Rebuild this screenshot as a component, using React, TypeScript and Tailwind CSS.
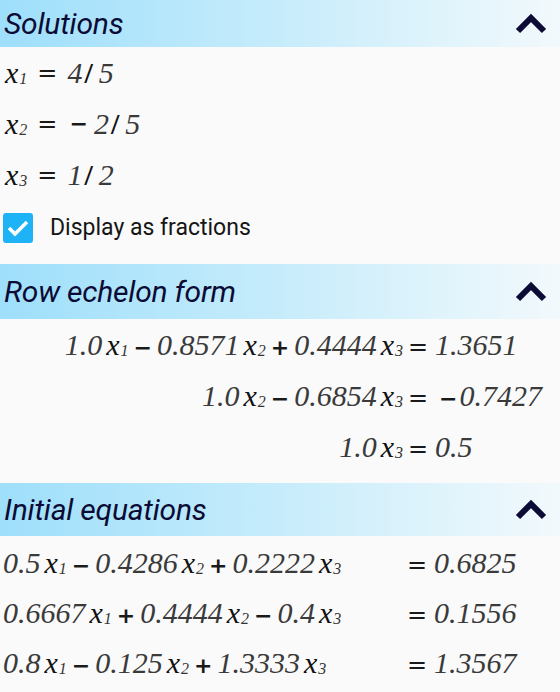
import React, { useState } from "react";

type Term = { sign?: "+" | "−"; coef: string; idx: number };

const mathFont = { fontFamily: '"Liberation Serif", "DejaVu Serif", serif' };
const opFont = { fontFamily: '"DejaVu Sans", "Liberation Sans", sans-serif' };

const Sub: React.FC<{ n: number }> = ({ n }) => (
  <sub className="text-[16px] italic text-[#333] relative top-[1px] ml-[1px]">{n}</sub>
);

const Var: React.FC<{ n: number }> = ({ n }) => (
  <span className="italic text-[#111] ml-[4px]">
    x<Sub n={n} />
  </span>
);

const Op: React.FC<{ c: string; cls?: string }> = ({ c, cls = "" }) => (
  <span className={`not-italic font-bold text-[22px] text-[#1a1a1a] ${cls}`} style={opFont}>
    {c}
  </span>
);

const Eq: React.FC<{ cls?: string }> = ({ cls = "" }) => (
  <span className={`not-italic text-[24px] text-[#1a1a1a] ${cls}`} style={opFont}>
    =
  </span>
);

const Expr: React.FC<{ terms: Term[] }> = ({ terms }) => (
  <span className="whitespace-nowrap">
    {terms.map((t, i) => (
      <span key={i}>
        {t.sign && <Op c={t.sign} cls="mx-[5px]" />}
        <span className="italic text-[#3a3a3a]">{t.coef}</span>
        <Var n={t.idx} />
      </span>
    ))}
  </span>
);

const Rhs: React.FC<{ value: string }> = ({ value }) => {
  const neg = value.startsWith("-");
  return (
    <span className="whitespace-nowrap">
      <Eq cls="mr-[7px]" />
      {neg && <Op c="−" cls="ml-[4px] mr-[2px]" />}
      <span className="italic text-[#3a3a3a]">{neg ? value.slice(1) : value}</span>
    </span>
  );
};

const ChevronUp = () => (
  <svg width="32" height="22" viewBox="0 0 32 22">
    <polyline
      points="3,18 16,5 29,18"
      fill="none"
      stroke="#0b0b35"
      strokeWidth="6"
      strokeLinejoin="miter"
    />
  </svg>
);

const SectionHeader: React.FC<{ title: string; h: string; onToggle: () => void }> = ({
  title,
  h,
  onToggle,
}) => (
  <button
    onClick={onToggle}
    className={`w-full ${h} flex items-center justify-between pl-[4px] pr-[13px] bg-gradient-to-r from-[#9edffb] via-[#c6ecfb] to-[#f2f9fc]`}
  >
    <span
      className="italic text-[30px] text-[#0b0b35] leading-none tracking-[-0.2px]"
      style={{ fontFamily: 'Roboto, "Noto Sans", sans-serif' }}
    >
      {title}
    </span>
    <ChevronUp />
  </button>
);

const echelon: { terms: Term[]; rhs: string }[] = [
  {
    terms: [
      { coef: "1.0", idx: 1 },
      { sign: "−", coef: "0.8571", idx: 2 },
      { sign: "+", coef: "0.4444", idx: 3 },
    ],
    rhs: "1.3651",
  },
  {
    terms: [
      { coef: "1.0", idx: 2 },
      { sign: "−", coef: "0.6854", idx: 3 },
    ],
    rhs: "-0.7427",
  },
  { terms: [{ coef: "1.0", idx: 3 }], rhs: "0.5" },
];

const initial: { terms: Term[]; rhs: string }[] = [
  {
    terms: [
      { coef: "0.5", idx: 1 },
      { sign: "−", coef: "0.4286", idx: 2 },
      { sign: "+", coef: "0.2222", idx: 3 },
    ],
    rhs: "0.6825",
  },
  {
    terms: [
      { coef: "0.6667", idx: 1 },
      { sign: "+", coef: "0.4444", idx: 2 },
      { sign: "−", coef: "0.4", idx: 3 },
    ],
    rhs: "0.1556",
  },
  {
    terms: [
      { coef: "0.8", idx: 1 },
      { sign: "−", coef: "0.125", idx: 2 },
      { sign: "+", coef: "1.3333", idx: 3 },
    ],
    rhs: "1.3567",
  },
];

const App: React.FC = () => {
  const [open, setOpen] = useState({ sol: true, ech: true, init: true });
  const [fractions, setFractions] = useState(true);

  const solutions = fractions
    ? [
        { idx: 1, val: "4", den: "5", neg: false },
        { idx: 2, val: "2", den: "5", neg: true },
        { idx: 3, val: "1", den: "2", neg: false },
      ]
    : [
        { idx: 1, val: "0.8", den: "", neg: false },
        { idx: 2, val: "0.4", den: "", neg: true },
        { idx: 3, val: "0.5", den: "", neg: false },
      ];

  return (
    <div className="w-[560px] h-[692px] bg-[#fafafa] overflow-hidden">
      {/* Solutions */}
      <SectionHeader title="Solutions" h="h-[47px]" onToggle={() => setOpen({ ...open, sol: !open.sol })} />
      {open.sol && (
        <div className="text-[30px]" style={mathFont}>
          {solutions.map((s) => (
            <div key={s.idx} className="h-[51px] flex items-center pl-[5px]">
              <span className="italic text-[#111]">
                x<Sub n={s.idx} />
              </span>
              <Eq cls="mx-[10px]" />
              {s.neg && <Op c="−" cls="ml-[2px] mr-[6px]" />}
              <span className="italic text-[#3a3a3a]">{s.val}</span>
              {s.den && (
                <>
                  <span className="font-bold not-italic text-[#111] ml-[2px] mr-[6px]">/</span>
                  <span className="italic text-[#3a3a3a]">{s.den}</span>
                </>
              )}
            </div>
          ))}
          <label className="h-[56px] flex items-center pl-[3px] cursor-pointer">
            <span
              onClick={() => setFractions(!fractions)}
              className={`w-[30px] h-[30px] rounded-[3px] flex items-center justify-center ${
                fractions ? "bg-[#1eb3f7]" : "border-2 border-[#777]"
              }`}
            >
              {fractions && (
                <svg width="22" height="18" viewBox="0 0 22 18">
                  <polyline points="2,9 8,15 20,3" fill="none" stroke="white" strokeWidth="3.5" />
                </svg>
              )}
            </span>
            <span
              className="ml-[17px] text-[23px] text-[#151515]"
              style={{ fontFamily: 'Roboto, "Noto Sans", sans-serif' }}
            >
              Display as fractions
            </span>
          </label>
        </div>
      )}

      {/* Row echelon form */}
      <div className="mt-[8px]">
        <SectionHeader title="Row echelon form" h="h-[55px]" onToggle={() => setOpen({ ...open, ech: !open.ech })} />
        {open.ech && (
          <div className="text-[30px]" style={mathFont}>
            {echelon.map((r, i) => (
              <div key={i} className="h-[51px] grid grid-cols-[403px_1fr] items-center">
                <div className="text-right">
                  <Expr terms={r.terms} />
                </div>
                <div className="pl-[5px]">
                  <Rhs value={r.rhs} />
                </div>
              </div>
            ))}
          </div>
        )}
      </div>

      {/* Initial equations */}
      <div className="mt-[11px]">
        <SectionHeader title="Initial equations" h="h-[53px]" onToggle={() => setOpen({ ...open, init: !open.init })} />
        {open.init && (
          <div className="text-[30px] pt-[1px]" style={mathFont}>
            {initial.map((r, i) => (
              <div key={i} className="h-[50px] grid grid-cols-[403px_1fr] items-center">
                <div className="pl-[3px]">
                  <Expr terms={r.terms} />
                </div>
                <div className="pl-[4px]">
                  <Rhs value={r.rhs} />
                </div>
              </div>
            ))}
          </div>
        )}
      </div>
    </div>
  );
};

export default App;
